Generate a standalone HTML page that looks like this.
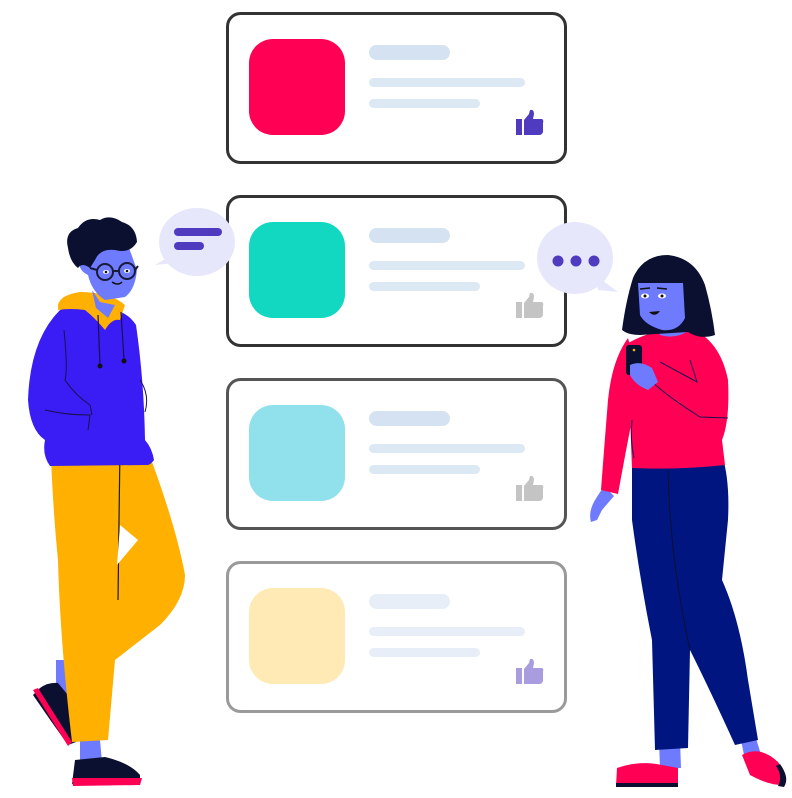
<!DOCTYPE html>
<html><head><meta charset="utf-8"><style>
html,body{margin:0;padding:0;background:#fff;width:792px;height:798px;overflow:hidden}
svg{display:block}
</style></head><body>
<svg width="792" height="798" viewBox="0 0 792 798" xmlns="http://www.w3.org/2000/svg">
<defs>
<g id="thumb">
<rect x="0" y="9" width="6" height="16"/>
<path d="M8 10 L13 4 L14 0 Q18 -1 18 4 L17 9 L26 9 Q28 10 27 13 L27 22 Q26 25 23 25 L8 25 Z"/>
</g>
</defs>
<g fill="#fff" stroke-width="3">
<rect x="227.5" y="13.5" width="338" height="149" rx="13" stroke="#333"/>
<rect x="227.5" y="196.5" width="338" height="149" rx="13" stroke="#333"/>
<rect x="227.5" y="379.5" width="338" height="149" rx="13" stroke="#555"/>
<rect x="227.5" y="562.5" width="338" height="149" rx="13" stroke="#9a9a9a"/>
</g>
<rect x="249" y="39" width="96" height="96" rx="24" fill="#ff0055"/>
<rect x="249" y="222" width="96" height="96" rx="24" fill="#12d8c1"/>
<rect x="249" y="405" width="96" height="96" rx="24" fill="#91e1ec"/>
<rect x="249" y="588" width="96" height="96" rx="24" fill="#ffeab5"/>
<g>
<rect x="369" y="45" width="81" height="15" rx="7.5" fill="#d5e2f2"/>
<rect x="369" y="78" width="156" height="9" rx="4.5" fill="#dde8f5"/>
<rect x="369" y="99" width="111" height="9" rx="4.5" fill="#dde8f5"/>
<rect x="369" y="228" width="81" height="15" rx="7.5" fill="#d5e2f2"/>
<rect x="369" y="261" width="156" height="9" rx="4.5" fill="#dde8f5"/>
<rect x="369" y="282" width="111" height="9" rx="4.5" fill="#dde8f5"/>
<rect x="369" y="411" width="81" height="15" rx="7.5" fill="#d5e2f2"/>
<rect x="369" y="444" width="156" height="9" rx="4.5" fill="#dde8f5"/>
<rect x="369" y="465" width="111" height="9" rx="4.5" fill="#dde8f5"/>
<rect x="369" y="594" width="81" height="15" rx="7.5" fill="#e8eef7"/>
<rect x="369" y="627" width="156" height="9" rx="4.5" fill="#e8eef7"/>
<rect x="369" y="648" width="111" height="9" rx="4.5" fill="#e8eef7"/>
</g>
<use href="#thumb" x="516" y="110" fill="#4f3bbf"/>
<use href="#thumb" x="516" y="293" fill="#c4c4c4"/>
<use href="#thumb" x="516" y="476" fill="#c4c4c4"/>
<use href="#thumb" x="516" y="659" fill="#a99ddf"/>

<ellipse cx="197" cy="242" rx="38" ry="34" fill="#e6e7fb"/>
<path d="M172 255 L155 265 L185 262 Z" fill="#e6e7fb"/>
<rect x="174" y="228" width="48" height="8" rx="4" fill="#4f3bbf"/>
<rect x="174" y="242" width="30" height="8" rx="4" fill="#4f3bbf"/>
<ellipse cx="575" cy="258" rx="38" ry="36" fill="#e6e7fb"/>
<path d="M595 275 L618 292 L598 290 Z" fill="#e6e7fb"/>
<circle cx="558" cy="261" r="5.5" fill="#4f3bbf"/>
<circle cx="576" cy="261" r="5.5" fill="#4f3bbf"/>
<circle cx="594" cy="261" r="5.5" fill="#4f3bbf"/>

<!-- MAN -->
<path d="M56 660 L75 660 L78 700 L68 710 L56 700 Z" fill="#6e7bff"/>
<path d="M40 688 Q48 682 58 683 L72 700 L76 742 L68 745 Q50 720 33 695 Z" fill="#0b1030"/>
<path d="M33 690 L68 746 L72 742 L38 688 Z" fill="#ff0055"/>
<path d="M80 740 L100 740 L102 762 L80 762 Z" fill="#6e7bff"/>
<path d="M75 760 L105 757 Q130 763 140 775 L140 783 L72 784 Z" fill="#0b1030"/>
<path d="M72 778 L142 778 L140 785 L73 786 Z" fill="#ff0055"/>
<path d="M50 430 L140 430 Q175 520 185 575 Q185 600 160 625 L115 660 L108 740 L72 742 Q60 640 58 560 Q52 500 50 430 Z" fill="#ffb000"/>
<path d="M120 445 L118 600" stroke="#1a1a1a" stroke-width="1.2" fill="none"/>
<path d="M120 525 L138 540 L117 565" fill="#fff"/>
<path d="M60 310 Q80 300 95 305 L115 310 Q128 313 136 325 Q144 380 145 440 Q152 448 154 460 Q150 466 145 465 L50 466 Q42 455 45 440 Q30 430 28 400 Q30 340 60 310 Z" fill="#3a1cf5"/>
<path d="M64 330 Q68 370 65 380 Q75 395 90 405 L92 415" stroke="#1a1050" stroke-width="1" fill="none"/>
<path d="M45 410 Q65 415 90 415 L88 430" stroke="#1a1050" stroke-width="1" fill="none"/>
<path d="M140 380 Q150 395 145 412" stroke="#1a1050" stroke-width="1" fill="none"/>
<path d="M58 305 Q60 295 80 292 Q110 292 125 305 L120 320 Q112 318 105 330 Q95 318 85 310 Q70 308 58 310 Z" fill="#ffb000"/>
<path d="M98 315 L100 365 M121 312 L124 360" stroke="#1a1050" stroke-width="1.2" fill="none"/>
<circle cx="100" cy="366" r="2.5" fill="#111"/>
<circle cx="124" cy="361" r="2.5" fill="#111"/>
<path d="M92 290 L100 302 L115 305 L108 318 L96 308 Z" fill="#6e7bff"/>
<path d="M85 245 Q100 235 128 245 L137 270 Q135 290 125 297 L105 300 Q92 292 88 275 Q78 270 80 262 Q82 258 88 262 Z" fill="#6e7bff"/>
<path d="M68 248 Q64 232 78 228 Q86 216 100 220 Q110 214 122 222 Q136 226 137 242 Q130 254 115 250 Q100 248 95 260 L90 268 Q82 262 78 268 Q70 262 68 248 Z" fill="#0b1030"/>
<circle cx="105" cy="272" r="8" fill="none" stroke="#1a1a3a" stroke-width="2"/>
<circle cx="127" cy="271" r="8" fill="none" stroke="#1a1a3a" stroke-width="2"/>
<path d="M113 271 L119 271 M97 270 L90 268 M135 270 L138 266" stroke="#1a1a3a" stroke-width="2"/>
<ellipse cx="106" cy="272" rx="3" ry="2" fill="#fff"/><ellipse cx="127" cy="271" rx="3" ry="2" fill="#fff"/>
<circle cx="106" cy="272" r="1.3" fill="#111"/><circle cx="127" cy="271" r="1.3" fill="#111"/>
<path d="M112 282 Q118 286 122 282" stroke="#111" stroke-width="1.5" fill="none"/>

<!-- WOMAN -->
<path d="M659 740 L680 740 L681 768 L660 768 Z" fill="#6e7bff"/>
<path d="M740 735 L755 735 L762 758 L745 760 Z" fill="#6e7bff"/>
<path d="M617 768 Q640 760 662 765 L678 768 L678 785 L616 786 Z" fill="#ff0055"/>
<path d="M616 783 L678 783 L678 787 L616 787 Z" fill="#0b1030"/>
<path d="M742 755 Q760 745 778 762 Q788 778 782 785 Q768 785 750 775 Z" fill="#ff0055"/>
<path d="M780 764 Q790 778 784 787 L778 786 Q783 776 776 766 Z" fill="#0b1030"/>
<path d="M632 460 L722 455 Q730 480 728 520 Q724 560 722 580 Q740 620 748 680 L758 740 L735 745 Q710 690 690 650 L688 748 L655 750 L652 640 Q640 580 632 520 Z" fill="#001580"/>
<path d="M668 470 Q670 560 690 650" stroke="#0b1030" stroke-width="1" fill="none"/>
<path d="M604 486 L595 500 Q588 512 591 522 L597 520 L602 510 L614 496 Z" fill="#6e7bff"/>
<path d="M628 338 Q612 360 608 400 Q604 450 601 490 L618 494 Q626 450 632 420 L640 380 Z" fill="#ff0055"/>
<path d="M625 345 Q650 330 668 332 L690 328 Q720 340 728 380 Q730 420 722 440 L725 465 Q680 470 632 468 Q630 420 630 400 Q624 370 625 345 Z" fill="#ff0055"/>
<path d="M648 378 Q665 395 700 417 L728 418" stroke="#1a1050" stroke-width="1" fill="none"/>
<path d="M690 360 L697 382 L660 362" stroke="#1a1050" stroke-width="1" fill="none"/>
<path d="M632 420 Q630 440 634 458" stroke="#1a1050" stroke-width="1" fill="none"/>
<path d="M655 320 L680 318 L690 330 Q675 340 660 335 Z" fill="#6e7bff"/>
<rect x="626" y="345" width="16" height="30" rx="3" fill="#0b1030"/>
<circle cx="634" cy="350" r="1.3" fill="#ffb000"/>
<path d="M630 365 Q640 360 652 368 L658 382 L648 390 Q635 385 630 375 Z" fill="#6e7bff"/>
<path d="M622 330 Q626 300 633 278 Q643 255 668 255 Q695 258 705 285 Q712 310 715 335 Q700 340 688 332 L640 335 Q628 335 622 330 Z" fill="#0b1030"/>
<path d="M638 283 L683 283 L685 318 Q678 332 662 330 Q645 325 640 315 Z" fill="#6e7bff"/>
<path d="M636 292 Q640 262 665 262 Q688 262 690 288 L686 290 L685 283 L638 283 Z" fill="#0b1030"/>
<ellipse cx="645" cy="296" rx="4" ry="2.5" fill="#fff"/><ellipse cx="662" cy="296" rx="4" ry="2.5" fill="#fff"/>
<circle cx="645" cy="296" r="1.5" fill="#111"/><circle cx="662" cy="296" r="1.5" fill="#111"/>
<path d="M640 289 L650 288 M657 288 L667 289" stroke="#111" stroke-width="1.5"/>
<path d="M649 312 Q655 318 660 311 Z" fill="#111"/>
</svg>
</body></html>
